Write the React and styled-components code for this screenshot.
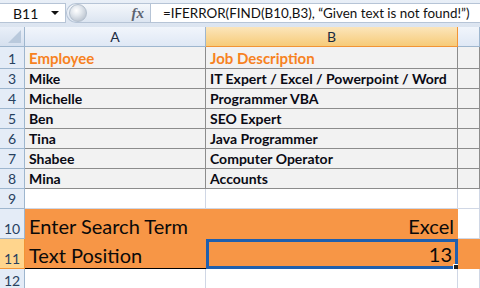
import React from 'react';
import styled, { createGlobalStyle, css } from 'styled-components';

const GlobalStyle = createGlobalStyle`
  html, body {
    margin: 0;
    padding: 0;
    width: 480px;
    height: 288px;
    overflow: hidden;
    background: #ffffff;
  }
  * {
    box-sizing: border-box;
  }
`;

const rows = [
  { n: '1', h: 22, kind: 'head', a: 'Employee', b: 'Job Description' },
  { n: '3', h: 20, kind: 'data', a: 'Mike', b: 'IT Expert / Excel / Powerpoint / Word' },
  { n: '4', h: 20, kind: 'data', a: 'Michelle', b: 'Programmer VBA' },
  { n: '5', h: 20, kind: 'data', a: 'Ben', b: 'SEO Expert' },
  { n: '6', h: 20, kind: 'data', a: 'Tina', b: 'Java Programmer' },
  { n: '7', h: 20, kind: 'data', a: 'Shabee', b: 'Computer Operator' },
  { n: '8', h: 20, kind: 'data', a: 'Mina', b: 'Accounts' },
  { n: '9', h: 20, kind: 'blank' },
  { n: '10', h: 30, kind: 'search', a: 'Enter Search Term', b: 'Excel' },
  { n: '11', h: 30, kind: 'result', a: 'Text Position', b: '13' },
  { n: '12', h: 22, kind: 'blank' },
];

function App() {
  return (
    <Window>
      <GlobalStyle />
      <FormulaBar>
        <NameBox>
          <span>B11</span>
          <DropArrow />
        </NameBox>
        <Grip>
          <GripKnob />
          <Fx>fx</Fx>
        </Grip>
        <FormulaInput>
          =IFERROR(FIND(B10,B3), “Given text is not found!”)
        </FormulaInput>
      </FormulaBar>
      <Sheet $heights={rows.map((r) => r.h)}>
        <Corner>
          <CornerMark />
        </Corner>
        <ColHead>A</ColHead>
        <ColHead $active>B</ColHead>
        <ColHead />
        {rows.map((r) => (
          <React.Fragment key={r.n}>
            <RowHead $active={r.kind === 'result'}>{r.n}</RowHead>
            <Cell $kind={r.kind} $col="a">
              {r.a}
            </Cell>
            <Cell $kind={r.kind} $col="b">
              {r.b}
              {r.kind === 'result' && <FillHandle />}
            </Cell>
            <Cell $kind={r.kind} $col="c" />
          </React.Fragment>
        ))}
      </Sheet>
    </Window>
  );
}

const Window = styled.div`
  width: 480px;
  height: 288px;
  overflow: hidden;
  display: flex;
  flex-direction: column;
  background: #dfe6ef;
  font-family: Lato, 'Liberation Sans', sans-serif;
`;

const FormulaBar = styled.div`
  display: flex;
  align-items: stretch;
  height: 30px;
  padding: 3px 0 4px 0;
  background: linear-gradient(#e9eff7, #dbe4f0);
`;

const NameBox = styled.div`
  width: 66px;
  display: flex;
  align-items: center;
  justify-content: space-between;
  padding: 0 6px 0 13px;
  background: #ffffff;
  border: 1px solid #b6c4d6;
  border-left: none;
  font-size: 14px;
  color: #111111;
`;

const DropArrow = styled.span`
  width: 0;
  height: 0;
  border-left: 4px solid transparent;
  border-right: 4px solid transparent;
  border-top: 4px solid #111111;
`;

const Grip = styled.div`
  width: 84px;
  display: flex;
  align-items: center;
  justify-content: space-between;
  padding: 0 6px 0 2px;
  border-radius: 11px 0 0 11px;
  background: linear-gradient(#f4f7fb, #dce5f1);
  border: 1px solid #b6c4d6;
  border-right: none;
`;

const GripKnob = styled.span`
  width: 18px;
  height: 18px;
  border-radius: 50%;
  background: radial-gradient(circle at 40% 35%, #ffffff 0, #e3e8ee 35%, #a9b4c2 100%);
  border: 1px solid #b3bfcd;
`;

const Fx = styled.span`
  font-family: 'Liberation Serif', serif;
  font-style: italic;
  font-weight: bold;
  font-size: 15px;
  color: #5d6470;
`;

const FormulaInput = styled.div`
  flex: 1;
  display: flex;
  align-items: center;
  padding-left: 12px;
  white-space: nowrap;
  overflow: hidden;
  background: #ffffff;
  border: 1px solid #b6c4d6;
  border-right: none;
  font-size: 13.4px;
  color: #111111;
`;

const Sheet = styled.div`
  display: grid;
  grid-template-columns: 25px 181px 252px 1fr;
  grid-template-rows: 20px ${({ $heights }) => $heights.map((h) => `${h}px`).join(' ')};
  background: #ffffff;
`;

const headBase = css`
  display: flex;
  align-items: center;
  justify-content: center;
  font-size: 14px;
  color: #27415f;
`;

const Corner = styled.div`
  position: relative;
  background: linear-gradient(#e9eff8, #d5e0ef);
  border-right: 1px solid #9eb6ce;
  border-bottom: 1px solid #9eb6ce;
`;

const CornerMark = styled.span`
  position: absolute;
  right: 3px;
  bottom: 3px;
  width: 0;
  height: 0;
  border-left: 13px solid transparent;
  border-bottom: 13px solid #b9c9dc;
`;

const ColHead = styled.div`
  ${headBase}
  background: ${({ $active }) =>
    $active
      ? 'linear-gradient(#fbe5bb, #f7cb78)'
      : 'linear-gradient(#f1f5fb, #dfe8f5)'};
  border-right: 1px solid ${({ $active }) => ($active ? '#f29436' : '#9eb6ce')};
  border-bottom: 1px solid ${({ $active }) => ($active ? '#f29436' : '#9eb6ce')};
  color: #1b2b40;
`;

const RowHead = styled.div`
  ${headBase}
  align-items: flex-end;
  padding-bottom: 1px;
  background: ${({ $active }) => ($active ? '#ffd58d' : '#e4ecf7')};
  border-right: 1px solid ${({ $active }) => ($active ? '#f29436' : '#9eb6ce')};
  border-bottom: 1px solid ${({ $active }) => ($active ? '#f29436' : '#9eb6ce')};
`;

const kinds = {
  head: css`
    background: #f2f2f2;
    border-right: 1px solid #8c8c8c;
    border-bottom: 1px solid #8c8c8c;
    color: #f7821f;
    font-weight: 700;
    font-size: 15px;
  `,
  data: css`
    background: #f2f2f2;
    border-right: 1px solid #8c8c8c;
    border-bottom: 1px solid #8c8c8c;
    color: #0a0a14;
    font-weight: 700;
    font-size: 14px;
  `,
  blank: css`
    background: #ffffff;
    border-right: 1px solid #d0d7e5;
    border-bottom: 1px solid #d0d7e5;
  `,
  search: css`
    background: #f79646;
    font-size: 20px;
    color: #0a0a0a;
  `,
  result: css`
    background: #f79646;
    font-size: 20px;
    color: #0a0a0a;
  `,
};

const Cell = styled.div`
  position: relative;
  display: flex;
  align-items: flex-end;
  padding: 0 4px 1px 4px;
  white-space: nowrap;
  overflow: visible;
  ${({ $kind }) => kinds[$kind]}
  ${({ $col, $kind }) =>
    $col === 'b' &&
    ($kind === 'search' || $kind === 'result') &&
    css`
      justify-content: flex-end;
    `}
  ${({ $kind, $col }) =>
    $kind === 'search' &&
    $col === 'c' &&
    css`
      background: #ffffff;
      border-right: 1px solid #d0d7e5;
      border-bottom: 1px solid #d0d7e5;
    `}
  ${({ $kind, $col }) =>
    $kind === 'result' &&
    $col !== 'c' &&
    css`
      border-bottom: 1px solid #000000;
    `}
  ${({ $kind, $col }) =>
    $kind === 'result' &&
    $col === 'b' &&
    css`
      border: 3px solid #1f5fae;
      padding: 0 3px 0 4px;
    `}
`;

const FillHandle = styled.span`
  position: absolute;
  right: -5px;
  bottom: -5px;
  width: 7px;
  height: 7px;
  background: #1f1f1f;
  border: 1px solid #ffffff;
`;

export default App;
